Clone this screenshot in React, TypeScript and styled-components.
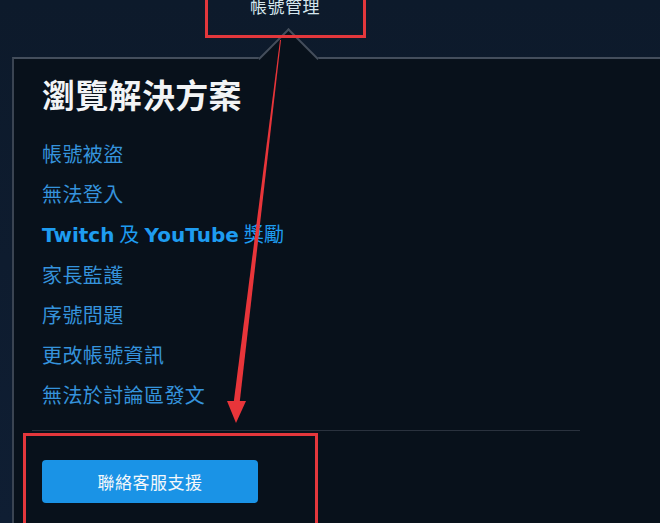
import React from "react";
import styled, { createGlobalStyle } from "styled-components";

const GlobalStyle = createGlobalStyle`
  html, body {
    margin: 0;
    padding: 0;
    background: #0e1b2d;
  }
  body {
    font-family: "Noto Sans CJK TC", "Noto Sans", sans-serif;
  }
`;

const Page = styled.div`
  position: relative;
  width: 660px;
  height: 523px;
  overflow: hidden;
  background: linear-gradient(180deg, #0d1a2b 0%, #0f1e33 100%);
`;

const TopNav = styled.nav`
  height: 57px;
  display: flex;
  justify-content: flex-start;
`;

const NavTab = styled.div`
  margin-left: 250px;
  margin-top: -4px;
  font-size: 17px;
  line-height: 20px;
  color: #d6e7ee;
  letter-spacing: 0.5px;
`;

const Panel = styled.section`
  position: relative;
  margin-left: 12px;
  height: 466px;
  background: #08111b;
  border-top: 2px solid #444e5c;
  border-left: 2px solid #3a4452;
  padding: 15px 0 0 28px;
  box-sizing: border-box;

  &::before {
    content: "";
    position: absolute;
    left: 253px;
    top: -22px;
    width: 41px;
    height: 41px;
    background: #08111b;
    border-top: 2px solid #444e5c;
    border-left: 2px solid #444e5c;
    transform: rotate(45deg);
  }
`;

const Heading = styled.h2`
  position: relative;
  margin: 0 0 20px;
  font-size: 33px;
  line-height: 40px;
  font-weight: 700;
  color: #f2f4f6;
  letter-spacing: 0.3px;
`;

const LinkList = styled.ul`
  list-style: none;
  margin: 0;
  padding: 0;
`;

const LinkItem = styled.li<{ $accent?: boolean }>`
  font-size: 20px;
  line-height: 40px;
  color: ${(p) => (p.$accent ? "#1e9cf0" : "#3593dc")};
  white-space: nowrap;
  letter-spacing: 0.4px;

  & b {
    font-family: "DejaVu Sans", "Noto Sans", sans-serif;
    font-weight: 700;
    letter-spacing: 0;
  }
`;

const Divider = styled.hr`
  margin: 15px 0 0 -10px;
  width: 548px;
  border: none;
  border-top: 1px solid #2a323e;
`;

const SupportButton = styled.button`
  margin-top: 29px;
  width: 216px;
  height: 43px;
  border: none;
  border-radius: 4px;
  background: #1a93e6;
  color: #f4f8fb;
  font-family: "Noto Sans CJK TC", sans-serif;
  font-size: 17px;
  letter-spacing: 0.5px;
  cursor: pointer;
`;

const Annotations = styled.svg`
  position: absolute;
  inset: 0;
  pointer-events: none;
`;

const links: { label: React.ReactNode; accent?: boolean }[] = [
  { label: "帳號被盜" },
  { label: "無法登入" },
  {
    label: (
      <>
        <b>Twitch</b> 及 <b>YouTube</b> 獎勵
      </>
    ),
    accent: true,
  },
  { label: "家長監護" },
  { label: "序號問題" },
  { label: "更改帳號資訊" },
  { label: "無法於討論區發文" },
];

export default function App() {
  return (
    <>
      <GlobalStyle />
      <Page>
        <TopNav>
          <NavTab>帳號管理</NavTab>
        </TopNav>
        <Panel>
          <Heading>瀏覽解決方案</Heading>
          <LinkList>
            {links.map((l, i) => (
              <LinkItem key={i} $accent={l.accent}>
                {l.label}
              </LinkItem>
            ))}
          </LinkList>
          <Divider />
          <SupportButton>聯絡客服支援</SupportButton>
        </Panel>
        <Annotations width="660" height="523" viewBox="0 0 660 523">
          <rect x="206.5" y="-10" width="158" height="46.5" fill="none" stroke="#e3373c" strokeWidth="3" />
          <rect x="24.5" y="434.5" width="292" height="100" fill="none" stroke="#e3373c" strokeWidth="3" />
          <polygon points="280,40 281,40 239.5,404 233.5,404" fill="#e8353a" />
          <polygon points="227,401 246,401 236,423" fill="#e8353a" />
        </Annotations>
      </Page>
    </>
  );
}
